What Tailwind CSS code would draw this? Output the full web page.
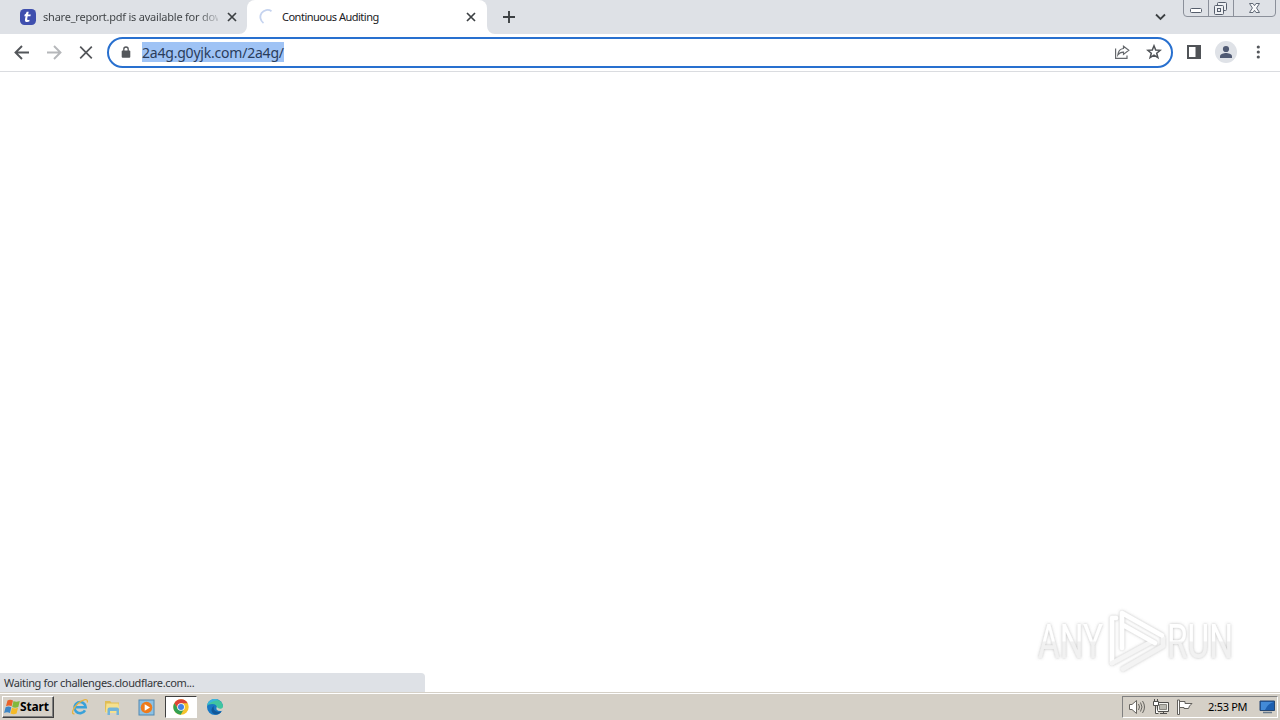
<!DOCTYPE html>
<html lang="en">
<head>
<meta charset="utf-8">
<title>Continuous Auditing</title>
<script src="https://cdn.jsdelivr.net/npm/@tailwindcss/browser@4"></script>
</head>
<body class="w-[1280px] h-[720px] overflow-hidden bg-white flex flex-col font-['Noto_Sans','DejaVu_Sans',sans-serif] text-[#202124]">

<!-- Tab strip -->
<header class="relative h-[34px] shrink-0 bg-[#dee1e6] flex items-start">
  <div class="w-[247px] h-[34px] flex items-center pl-5 text-[11px] text-[#45474a]">
    <svg class="w-4 h-4 shrink-0" viewBox="0 0 16 16"><rect width="16" height="16" rx="4.5" fill="#3f4fae"/><path d="M8.7 2.8 8.1 5.4H10.8L10.4 7.2H7.7L7.2 9.8C7 11 7.8 11.3 9.6 10.8L9.3 12.6C6.5 13.7 4.5 12.8 5 10.2L5.6 7.2H4.3L4.7 5.6Q6 5.2 6.7 2.8Z" fill="#fff"/></svg>
    <span class="ml-[7px] w-[175px] overflow-hidden whitespace-nowrap tracking-[-0.22px] leading-[16px] bg-linear-to-r from-[#3c4043] from-88% to-[#3c4043]/20 bg-clip-text text-transparent">share_report.pdf is available for dow</span>
    <svg class="ml-[9px] w-[10px] h-[10px] shrink-0" viewBox="0 0 10 10"><path d="M1 1l8 8M9 1l-8 8" stroke="#3c4043" stroke-width="1.7"/></svg>
  </div>
  <div class="w-[240px] h-[34px] bg-white rounded-t-lg flex items-center pl-3 text-[11px]">
    <svg class="w-4 h-4 shrink-0" viewBox="0 0 16 16" fill="none"><path d="M12.5 2.2A7 7 0 1 0 4.5 14" stroke="#c5d3ef" stroke-width="1.8"/></svg>
    <span class="ml-[7px] w-[175px] whitespace-nowrap tracking-[-0.5px] leading-[16px]">Continuous Auditing</span>
    <svg class="ml-[9px] w-[10px] h-[10px] shrink-0" viewBox="0 0 10 10"><path d="M1 1l8 8M9 1l-8 8" stroke="#3c4043" stroke-width="1.7"/></svg>
  </div>
  <svg class="absolute left-[239px] top-[26px] w-2 h-2" viewBox="0 0 8 8"><path d="M8 0V8H0A8 8 0 0 0 8 0" fill="#fff"/></svg>
  <svg class="absolute left-[487px] top-[26px] w-2 h-2" viewBox="0 0 8 8"><path d="M0 0V8H8A8 8 0 0 1 0 0" fill="#fff"/></svg>
  <svg class="ml-[15px] mt-[10px] w-[14px] h-[14px]" viewBox="0 0 14 14"><path d="M7 1v12M1 7h12" stroke="#3c4043" stroke-width="1.9"/></svg>
  <svg class="ml-auto mr-[17px] mt-[12px] w-[11px] h-[10px]" viewBox="0 0 11 10" fill="none"><path d="M1 2.5 5.5 7 10 2.5" stroke="#3c4043" stroke-width="1.8"/></svg>
  <svg class="w-[97px] h-[18px]" viewBox="0 0 97 18" fill="none">
    <path d="M.5 0V13Q.5 16.5 4 16.5H89Q92.500 16.500 92.500 13V0M25.500 0V16M50.500 0V16" stroke="#8b909a"/>
    <rect x="7.500" y="8.500" width="11" height="4" rx="1" fill="#fff" stroke="#565e6c"/>
    <g fill="#eef0f3" stroke="#565e6c"><rect x="34.500" y="2.500" width="9" height="8" rx="1"/><rect x="31.500" y="5.500" width="9" height="9" rx="1"/><rect x="34.500" y="8.500" width="3" height="3"/></g>
    <path d="M66.500 3.500H70L71.500 5.700 73 3.500H76.500L73.600 8 76.500 12.500H73L71.500 10.300 70 12.500H66.500L69.400 8Z" fill="#f7f8fa" stroke="#626a77"/>
  </svg>
</header>

<!-- Toolbar -->
<div class="h-[38px] shrink-0 bg-white border-b border-[#dadce0] flex items-center pl-[14px]">
  <svg class="w-4 h-4" viewBox="0 0 16 16" fill="none" stroke="#53565a" stroke-width="1.9"><path d="M15 7.500H2M8 1 1.500 7.500 8 14"/></svg>
  <svg class="ml-4 w-4 h-4" viewBox="0 0 16 16" fill="none" stroke="#b5b7ba" stroke-width="1.900"><path d="M1 7.500H14M8 1 14.500 7.500 8 14"/></svg>
  <svg class="ml-4 w-4 h-4" viewBox="0 0 16 16" fill="none" stroke="#53565a" stroke-width="1.700"><path d="M2.200 1.700 13.800 13.300M13.800 1.700 2.200 13.300"/></svg>
  <div class="ml-[13px] w-[1066px] h-[31px] rounded-full border-2 border-[#2870cf] flex items-center pl-[12px] pr-[9px]">
    <svg class="w-[10px] h-[12px] -mt-px" viewBox="0 0 10 12"><rect x=".7" y="4.500" width="8.600" height="7.200" rx="1" fill="#54575b"/><path d="M2.800 5V3.200a2.200 2.200 0 0 1 4.400 0V5" fill="none" stroke="#54575b" stroke-width="1.300"/></svg>
    <span class="-mt-px ml-[11px] w-[142px] h-[20px] leading-[21px] bg-[#9fc3f5] text-[14px] whitespace-nowrap tracking-[-0.21px] text-[#2a3d5c]">2a4g.g0yjk.com/2a4g/</span>
    <svg class="ml-auto w-4 h-4 -mt-px" viewBox="0 0 16 16" fill="none" stroke="#65686c" stroke-width="1.200"><path d="M1.600 4.500V14.400H13V11.500M9.500 2.200 14.800 6.300 9.500 10.400V8.100C7 8 5.200 9 3.800 11 4.200 7.200 6.200 4.900 9.500 4.500Z"/></svg>
    <svg class="ml-4 w-4 h-4 -mt-px" viewBox="0 0 16 16" fill="none" stroke="#505357" stroke-width="1.500"><path d="M8 1.800 9.700 6 14.200 6.300 10.700 9.200 11.900 13.700 8 11.200 4.100 13.700 5.300 9.200 1.800 6.300 6.300 6Z"/></svg>
  </div>
  <svg class="ml-[14px] w-[14px] h-[14px] -mt-px" viewBox="0 0 14 14"><path d="M1 1H13V13H1Z" fill="#fff" stroke="#505357" stroke-width="2"/><path d="M8.500 1H13V13H8.500Z" fill="#505357"/></svg>
  <svg class="ml-[14px] w-[22px] h-[22px] -mt-px" viewBox="0 0 22 22"><circle cx="11" cy="11" r="11" fill="#dfe2e7"/><circle cx="11" cy="8" r="3.100" fill="#505a73"/><path d="M5 17V15.200C5 13 9 12 11 12s6 1 6 3.200V17Z" fill="#505a73"/></svg>
  <svg class="ml-[19px] w-1 h-[14px] -mt-px" viewBox="0 0 4 14" fill="#54575b"><circle cx="2.300" cy="2" r="1.600"/><circle cx="2.300" cy="7" r="1.600"/><circle cx="2.300" cy="12" r="1.600"/></svg>
</div>

<!-- Page area -->
<main class="relative flex-1 bg-white">
  <svg class="absolute left-[1030px] top-[532px] w-[230px] h-[80px]" viewBox="0 0 230 80">
    <defs>
      <filter id="glow" x="-10%" y="-20%" width="120%" height="140%"><feDropShadow dx="0" dy="0" stdDeviation="1.500" flood-color="#777" flood-opacity=".5"/></filter>
      <linearGradient id="face" x1="0" y1="0" x2="0" y2="72" gradientUnits="userSpaceOnUse"><stop offset=".51" stop-color="#fff"/><stop offset=".53" stop-color="#f1f1f1"/></linearGradient>
    </defs>
    <g filter="url(#glow)" fill="url(#face)" font-family="Roboto, sans-serif" font-size="49">
      <text x="8" y="54" textLength="65" lengthAdjust="spacingAndGlyphs">ANY</text>
      <text x="137" y="54" textLength="66" lengthAdjust="spacingAndGlyphs">RUN</text>
    </g>
    <g fill="none" stroke="#fff" stroke-width="4.500" stroke-linejoin="round" stroke-linecap="round" filter="url(#glow)">
      <path d="M86 14H82V59" /><path d="M82 59 86 57 121 38" stroke="#f5f5f5"/>
      <path d="M93 65 133 42V34" stroke="#f3f3f3"/>
      <path d="M92 44V9L132 31.500M93 21 125 39"/>
    </g>
  </svg>
  <div class="absolute left-0 bottom-0 w-[425px] h-[19px] rounded-tr-[4px] bg-[#dee1e6] pl-1 text-[11px] leading-[20px] tracking-[-0.34px] whitespace-nowrap text-[#33363a]">Waiting for challenges.cloudflare.com...</div>
</main>

<!-- Taskbar -->
<footer class="h-[28px] shrink-0 bg-[#d5d0c7] border-t border-[#d5d0c7] flex items-center">
  <div class="h-full w-full border-t border-white flex items-center">
    <div class="ml-[2px] w-[52px] h-[22px] border border-t-white border-l-white border-r-[#404040] border-b-[#404040] shadow-[inset_-1px_-1px_0_#808080] flex items-center pl-px">
      <svg class="w-4 h-4 shrink-0" viewBox="0 0 16 16"><path d="M3.500 1.500Q6 0 9 1.500L7.600 7.300Q5 5.800 2 7.300Z" fill="#ea6229"/><path d="M9.500 2Q12 3.500 15.800 2L14.300 8Q11 9.500 8.200 7.900Z" fill="#82b83c"/><path d="M1.600 8.200Q4.500 6.700 7.300 8.200L6 14Q3 12.500 .1 14Z" fill="#3d86c6"/><path d="M8 8.700Q11 10.200 14 8.800L12.600 14.500Q9.500 16 6.500 14.500Z" fill="#f5ba27"/></svg>
      <span class="font-bold text-[12px] leading-[18px] tracking-[-0.150px] text-black">Start</span>
    </div>
    <svg class="ml-[17px] w-[18px] h-[18px]" viewBox="0 0 18 18" fill="none"><path d="M14 12.300A5.600 5.600 0 1 1 14.700 9.300H5" stroke="#39a1d9" stroke-width="2.600"/><path d="M3.500 15.800C-.5 16.500 2 10 7 5.500 12 1.200 17.500 0 16.300 4.500" stroke="#e6b341" stroke-width="1.300"/></svg>
    <svg class="ml-[15px] w-[17px] h-[17px]" viewBox="0 0 17 17"><path d="M1 2H6L7.500 3.500H15V13H1Z" fill="#e0bd55"/><path d="M2.500 4.500H14.500L16 14H1.500Z" fill="#f5e08e"/><path d="M3.500 16V10.500Q3.500 8.500 5.500 8.500H13Q15 8.500 15 10.500V16H12.500V12H6V16Z" fill="#72b4da"/></svg>
    <svg class="ml-[17px] w-[17px] h-[17px]" viewBox="0 0 17 17"><rect x="1" y="1" width="15" height="15" fill="#8cc1e4" stroke="#5288b1"/><circle cx="8.500" cy="8.500" r="5.800" fill="#ee7b1c"/><path d="M6.700 5.200 12 8.500 6.700 11.800Z" fill="#fff"/></svg>
    <div class="ml-[10px] w-[32px] h-[22px] bg-white border border-t-[#404040] border-l-[#404040] border-r-white border-b-white flex items-center justify-center">
      <svg class="w-4 h-4" viewBox="0 0 16 16"><circle cx="8" cy="8" r="7.700" fill="#f5c32c"/><path d="M1.300 4.200A7.700 7.700 0 0 1 14.700 4.200H8L5 9.800Z" fill="#dc4437"/><path d="M1.300 4.200A7.700 7.700 0 0 0 7.700 15.700L11 10 5 9.800Z" fill="#32a052"/><circle cx="8" cy="8" r="3.800" fill="#fff"/><circle cx="8" cy="8" r="3" fill="#4282e4"/></svg>
    </div>
    <svg class="ml-[9px] w-[18px] h-[18px]" viewBox="0 0 18 18"><circle cx="9" cy="9" r="8" fill="#1978c4"/><path d="M1.200 7.500C3-.7 16.500-.5 17 8.500 17 12.500 12 13 10.500 11.200 12 9 10 6 6.500 6 3.700 6 2 7 1.200 7.500" fill="#40c5a0"/><path d="M1.200 7.500C2 1 9-.5 13 2.300 10 2.500 5 3 1.200 7.500" fill="#3ab5dd"/><path d="M10.500 11.200Q10.300 9.500 11 8.500L17.500 9V12L15.500 13Q12 13.500 10.500 11.200" fill="#d5d0c7"/><path d="M11 8.500C11 10 13 11 15 10.700 16.500 10.300 17 9.500 17 8.500L15 6Z" fill="#40c5a0"/><path d="M8 8C6.500 12 10 15 15.500 13.500 12 18.500 5 16.500 5.500 11.500Q5.800 9 8 8" fill="#125899"/></svg>
    <div class="ml-auto mr-[2px] w-[156px] h-[22px] border border-t-[#808080] border-l-[#808080] border-r-white border-b-white flex items-center pl-[5px]">
      <svg class="w-[18px] h-4" viewBox="0 0 18 16" fill="none" stroke="#66645f"><path d="M1.500 5.500H4L8.500 1.500V14.500L4 10.500H1.500Z" fill="#fff"/><path d="M10.500 5Q12.500 8 10.500 11M12.500 3.500Q15.500 8 12.500 12.500M14.500 2Q18.500 8 14.500 14"/></svg>
      <svg class="ml-[7px] w-4 h-4" viewBox="0 0 16 16" fill="none" stroke="#4f4e4b"><path d="M4.500 3.500H15.500V12.500H4.500Z" fill="#f5f5f1"/><path d="M6.500 5.500H13.500V10.500H6.500Z" fill="#b9b8b0" stroke="#888780"/><path d="M7 14.500H14M10.500 12.500V14"/><path d="M.5 2.500H5.500V6.500H.5ZM1.500 2.500V0M4.500 2.500V0M2.500 7V14.500H5.500" fill="#fff"/></svg>
      <svg class="ml-[7px] w-[17px] h-4" viewBox="0 0 17 16" fill="#fff" stroke="#63615d"><path d="M1.500 1H3.500V15.500H1.500ZM3.500 2.500H9V4.500H16L13.500 7 12.500 9.500H8V8.500H3.500Z"/></svg>
      <span class="ml-[15px] w-[42px] text-[11px] leading-[16px] tracking-[-0.3px] whitespace-nowrap text-black">2:53 PM</span>
      <svg class="ml-[9px] w-4 h-4 shrink-0" viewBox="0 0 16 16"><path d="M1 2H15.500V11.500H1Z" fill="#1d5fb0" stroke="#264772"/><path d="M2 3H14.500Q9 4.500 6 11H2Z" fill="#438ad7"/><path d="M4 13.500H13" stroke="#68798a" stroke-width="1.500"/></svg>
    </div>
  </div>
</footer>
</body>
</html>
